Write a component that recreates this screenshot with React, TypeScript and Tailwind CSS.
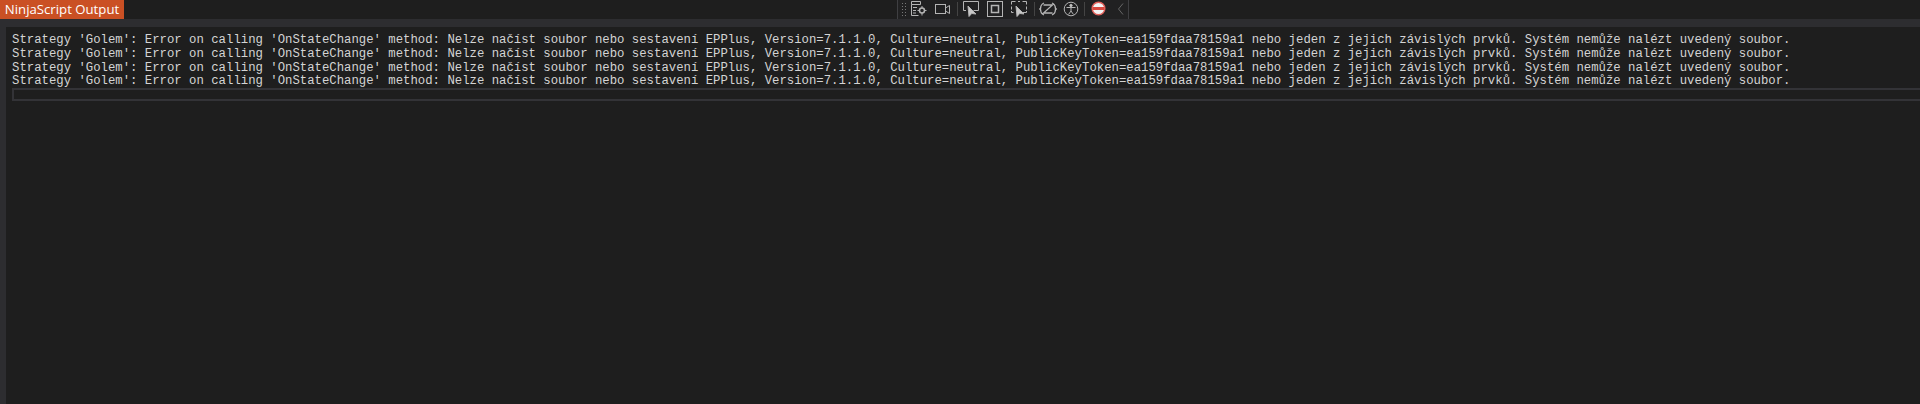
import React from "react";

const line = "Strategy 'Golem': Error on calling 'OnStateChange' method: Nelze načíst soubor nebo sestavení EPPlus, Version=7.1.1.0, Culture=neutral, PublicKeyToken=ea159fdaa78159a1 nebo jeden z jejich závislých prvků. Systém nemůže nalézt uvedený soubor.";

function Toolbar() {
  return (
    <div className="ml-[897px] flex h-[19px] w-[232px] items-center border-x border-[#3f3f42] bg-[#212122]">
      <div className="ml-[3px] h-[15px] w-[5px] bg-[radial-gradient(#777_1px,transparent_1px)] bg-[length:3px_3px]" />
      <svg width="222" height="19" viewBox="0 0 222 19" fill="none" stroke="#b4b4b4" strokeWidth="1">
        <path d="M5.500 1.500h9v3h-9zM5.500 4.500v11h7M7 7.500h4M7 10.500h3M7 13h3" />
        <circle cx="16" cy="10.500" r="2.500" strokeWidth="1.500" />
        <path d="M16 6v2M16 13v2.500M11.500 10.500h2M18.500 10.500h2" />
        <rect x="29.500" y="4.500" width="10" height="9" />
        <path d="M39.500 8l4-2.500v8l-4-2.500z" />
        <path d="M51.500 2v14" stroke="#444" />
        <path d="M60 10.500h-2.500V1.500h15v9h-5" />
        <path d="M62 6l1 10.500 2.700-3 4.300 .5z" fill="#c8c8c8" />
        <rect x="81.500" y="1.500" width="15" height="15" />
        <rect x="85.500" y="5.500" width="7" height="7" strokeWidth="1.500" />
        <path d="M105.500 4.500v-3h4M112 1.500h2M116.500 1.500h4v3M105.500 6.500v3M120.500 6.500v3M105.500 11v1.500h2M117 12.500h3.500V11" />
        <path d="M110 6l1 10.500 2.700-3 4.300 .5z" fill="#c8c8c8" />
        <path d="M128.500 2v14" stroke="#444" />
        <path d="M138 3c-2.500 1-3.500 3.500-3.500 6s1 5 3.500 6M146 3c2.500 1 3.500 3.500 3.500 6s-1 5-3.500 6M137.500 5h9l-9 8h9" strokeWidth="1.300" />
        <path d="M135 7l-1.500 2 1.500 2M149 7l1.500 2-1.500 2" />
        <circle cx="165" cy="9" r="6.800" />
        <circle cx="165" cy="5.500" r="1.200" fill="#c8c8c8" />
        <path d="M160.500 7.500h9M165 7.500v3.500l-2.500 3.500M165 11l2.500 3.500" />
        <path d="M178.500 2v14" stroke="#444" />
        <circle cx="192.500" cy="8.500" r="6.300" fill="#f3f3f3" stroke="#e0605a" strokeWidth="1.500" />
        <path d="M187 8.500h11" stroke="#d8483f" strokeWidth="3" />
        <path d="M217 3.500l-4.500 5.500 4.500 5.500" stroke="#666" />
      </svg>
    </div>
  );
}

export default function App() {
  return (
    <div className="h-[404px] w-[1920px] overflow-hidden bg-[#1e1e1e]">
      <div className="relative h-[19px] bg-[#1e1e1e]">
        <div className="absolute left-0 top-0 flex h-[19px] w-[124px] items-center justify-center bg-[#ca5024] font-['Open_Sans',sans-serif] text-[13.200px] text-white">
          NinjaScript Output
        </div>
        <Toolbar />
      </div>
      <div className="h-[8px] bg-[#2d2d30]" />
      <div className="flex h-[377px]">
        <div className="w-[6px] bg-[#2d2d30]" />
        <div className="flex-1 pl-[6px] pt-[7px]">
          <div className="h-[54px] font-['Liberation_Mono',monospace] text-[12.300px] font-normal leading-[13.750px] whitespace-pre text-[#d4d4d4]">
            <div>{line}</div>
            <div>{line}</div>
            <div>{line}</div>
            <div>{line}</div>
          </div>
          <div className="h-[13px] border-y-2 border-l-2 border-[#333337]" />
        </div>
      </div>
    </div>
  );
}
